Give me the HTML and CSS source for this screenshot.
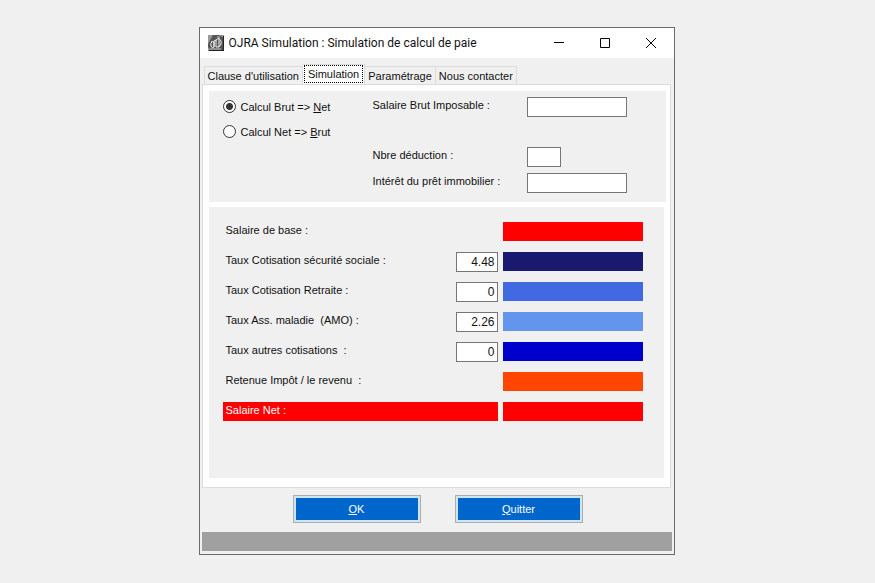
FILE: index.html
```html
<!DOCTYPE html>
<html lang="fr">
<head>
  <meta charset="UTF-8">
  <meta name="viewport" content="width=device-width, initial-scale=1">
  <title>OJRA Simulation</title>
  <link rel="stylesheet" href="styles.css">
</head>
<body>
  <main class="window">
    <header class="titlebar">
      <svg class="app-icon" viewBox="0 0 16 16" aria-hidden="true">
        <rect width="16" height="16" fill="#555"/>
        <path d="M0 0h5L0 9zM11 0h5v3zM0 12l4 4H0z" fill="#999"/>
        <path d="M4 7q-2 1-1 4t3 1V7q-1-1-3 0M6 12V6l2-1v7M8 5l3-2v9H8M11 4q3 1 2 5l-2 3" fill="none" stroke="#eee"/>
        <path d="M2 14h11M9 2h3" stroke="#ccc"/>
        <path d="M15.500 1v15M1 15.500h15" stroke="#222"/>
      </svg>
      <h1>OJRA Simulation : Simulation de calcul de paie</h1>
      <div class="window-controls">
        <button type="button" aria-label="Réduire">
          <svg viewBox="0 0 12 12"><path d="M1 5.500h10"/></svg>
        </button>
        <button type="button" aria-label="Agrandir">
          <svg viewBox="0 0 12 12"><path d="M1.500 1.500h9v9h-9z"/></svg>
        </button>
        <button type="button" aria-label="Fermer">
          <svg viewBox="0 0 12 12"><path d="M1 1l10 10M11 1L1 11"/></svg>
        </button>
      </div>
    </header>

    <form class="content">
      <nav class="tabs" role="tablist">
        <button type="button" class="tab" role="tab">Clause d'utilisation</button>
        <button type="button" class="tab active" role="tab" aria-selected="true"><span>Simulation</span></button>
        <button type="button" class="tab" role="tab">Paramétrage</button>
        <button type="button" class="tab" role="tab">Nous contacter</button>
      </nav>

      <div class="tab-panel">
        <!-- Saisie -->
        <section class="group inputs">
          <div class="modes">
            <label><input type="radio" name="mode" checked>Calcul Brut =&gt; <u>N</u>et</label>
            <label><input type="radio" name="mode">Calcul Net =&gt; <u>B</u>rut</label>
          </div>
          <div class="fields">
            <div class="field field-main">
              <label for="salaire">Salaire Brut Imposable :</label>
              <input type="text" id="salaire">
            </div>
            <div class="field">
              <label for="deduction">Nbre déduction :</label>
              <input type="text" id="deduction" class="short">
            </div>
            <div class="field">
              <label for="interet">Intérêt du prêt immobilier :</label>
              <input type="text" id="interet">
            </div>
          </div>
        </section>

        <!-- Résultats -->
        <section class="group results">
          <div class="row">
            <label for="base">Salaire de base :</label>
            <output id="base" class="bar red"></output>
          </div>
          <div class="row">
            <label for="secu">Taux Cotisation sécurité sociale :</label>
            <input type="text" id="secu" value="4.48">
            <output class="bar navy"></output>
          </div>
          <div class="row">
            <label for="retraite">Taux Cotisation Retraite :</label>
            <input type="text" id="retraite" value="0">
            <output class="bar royal"></output>
          </div>
          <div class="row">
            <label for="amo">Taux Ass. maladie&nbsp; (AMO) :</label>
            <input type="text" id="amo" value="2.26">
            <output class="bar sky"></output>
          </div>
          <div class="row">
            <label for="autres">Taux autres cotisations&nbsp; :</label>
            <input type="text" id="autres" value="0">
            <output class="bar blue"></output>
          </div>
          <div class="row">
            <label for="impot">Retenue Impôt / le revenu&nbsp; :</label>
            <output id="impot" class="bar orange"></output>
          </div>
          <div class="row total">
            <label for="net">Salaire Net :</label>
            <output id="net" class="bar red"></output>
          </div>
        </section>
      </div>

      <div class="actions">
        <button type="button" class="btn"><u>O</u>K</button>
        <button type="button" class="btn"><u>Q</u>uitter</button>
      </div>
    </form>

    <footer class="statusbar"></footer>
  </main>
</body>
</html>
```
FILE: styles.css
```css
* {
  box-sizing: border-box;
}

body {
  margin: 0;
  padding: 0 2px 2px 0;
  min-height: 100vh;
  display: flex;
  align-items: center;
  justify-content: center;
  background: #f0f0f0;
  color: #111;
  font-family: "Liberation Sans", Arial, sans-serif;
  font-size: 11px;
  line-height: 16px;
}

button,
input {
  font: inherit;
  color: inherit;
}

u {
  text-underline-offset: 1px;
}

.window {
  width: 100%;
  max-width: 476px;
  border: 1px solid #6b6b6b;
  background: #f0f0f0;
}

/* Title bar */
.titlebar {
  display: flex;
  align-items: center;
  height: 30px;
  padding-left: 8px;
  background: #fff;
}

.app-icon {
  width: 16px;
  height: 16px;
  margin-right: 5px;
}

.titlebar h1 {
  margin: 0;
  font-family: Roboto, "Open Sans", sans-serif;
  font-size: 12px;
  font-weight: 400;
  white-space: nowrap;
}

.window-controls {
  display: flex;
  margin-left: auto;
}

.window-controls button {
  display: flex;
  align-items: center;
  justify-content: center;
  width: 46px;
  height: 30px;
  padding: 0;
  border: none;
  background: none;
}

.window-controls svg {
  width: 12px;
  height: 12px;
  fill: none;
  stroke: #000;
}

/* Tabs */
.content {
  padding: 6px 3px 9px 2px;
}

.tabs {
  display: flex;
  align-items: flex-end;
  padding-left: 2px;
}

.tab {
  height: 18px;
  padding: 1px 3px 0;
  border: 1px solid #dcdcdc;
  border-bottom: none;
  border-left: none;
  background: #f0f0f0;
  white-space: nowrap;
}

.tab:first-child {
  border-left: 1px solid #dcdcdc;
}

.tab.active {
  height: 20px;
  padding: 0 1px;
  background: #fff;
}

.tab.active span {
  display: block;
  padding: 0 3px;
  border: 1px dotted #000;
}

.tab-panel {
  padding: 6px 4px 9px 6px;
  border: 1px solid #dcdcdc;
  background: #fff;
}

.group {
  background: #f0f0f0;
}

/* Inputs */
.inputs {
  display: flex;
  min-height: 111px;
  padding: 6px 14px;
}

.modes {
  display: flex;
  flex-direction: column;
  gap: 5px;
  width: 150px;
}

.modes label {
  display: flex;
  align-items: center;
  height: 20px;
  white-space: pre;
}

.modes input {
  appearance: none;
  width: 13px;
  height: 13px;
  margin: 0 5px 0 0;
  border: 1px solid #333;
  border-radius: 50%;
  background: #fff;
}

.modes input:checked {
  background: radial-gradient(circle, #333 3px, #fff 4px);
}

.fields {
  display: flex;
  flex-direction: column;
  gap: 6px;
}

.field {
  display: flex;
}

.field-main {
  margin-bottom: 24px;
}

.field label {
  width: 154px;
}

.field input,
.row input {
  width: 100px;
  height: 20px;
  padding: 0 2px;
  border: 1px solid #767676;
  background: #fff;
}

.field .short {
  width: 34px;
}

/* Results */
.results {
  display: grid;
  grid-auto-rows: 20px;
  gap: 10px;
  min-height: 271px;
  margin: 5px 2px 0 0;
  padding: 15px 21px 15px 14px;
  align-content: start;
}

.row {
  display: flex;
  align-items: flex-start;
  gap: 5px;
}

.row label {
  flex: 1;
  height: 19px;
  padding-left: 3px;
}

.row input {
  width: 42px;
  font-size: 12px;
  text-align: right;
}

.bar {
  width: 140px;
  height: 19px;
}

.red { background: #f00; }
.navy { background: #191970; }
.royal { background: #4169e1; }
.sky { background: #6495ed; }
.blue { background: #0000cd; }
.orange { background: #ff4500; }

.total label {
  background: #f00;
  color: #fff;
}

/* Buttons */
.actions {
  display: flex;
  justify-content: center;
  gap: 34px;
  padding: 7px 0 0 3px;
}

.btn {
  width: 128px;
  height: 28px;
  padding: 0;
  border: 1px solid #adadad;
  background: #0066cc;
  box-shadow: inset 0 0 0 2px #cfe4f5;
  color: #fff;
}

.statusbar {
  height: 19px;
  margin: 0 2px 3px 2px;
  background: #a0a0a0;
}
```
